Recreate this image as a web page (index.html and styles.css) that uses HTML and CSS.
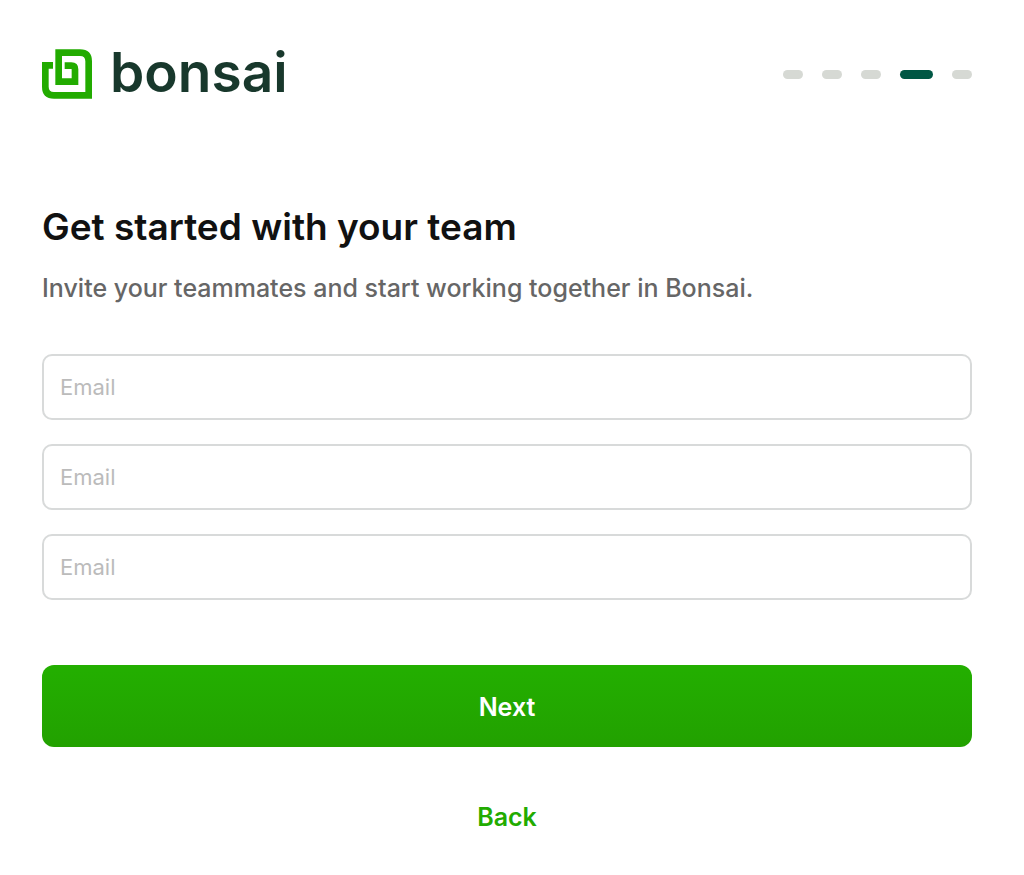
FILE: index.html
```html
<!DOCTYPE html>
<html lang="en">
<head>
  <meta charset="utf-8">
  <meta name="viewport" content="width=device-width, initial-scale=1">
  <title>Bonsai – Invite your team</title>
  <link rel="stylesheet" href="styles.css">
</head>
<body>
  <main class="page">
    <header class="header">
      <div class="brand">
        <svg class="brand-mark" viewBox="35 33 150 148" aria-hidden="true">
          <path d="M68 81H45V145Q45 171 71 171H175V69Q175 43 149 43H85V130H134V93Q134 82 123 82H103"/>
        </svg>
        <span class="brand-name">bonsai</span>
      </div>
      <ol class="steps" aria-label="Step 4 of 5">
        <li class="step"></li>
        <li class="step"></li>
        <li class="step"></li>
        <li class="step step-current" aria-current="step"></li>
        <li class="step"></li>
      </ol>
    </header>
    <h1 class="title">Get started with your team</h1>
    <p class="subtitle">Invite your teammates and start working together in Bonsai.</p>
    <form class="form">
      <div class="fields">
        <input class="field" type="email" placeholder="Email" aria-label="Email of teammate 1">
        <input class="field" type="email" placeholder="Email" aria-label="Email of teammate 2">
        <input class="field" type="email" placeholder="Email" aria-label="Email of teammate 3">
      </div>
      <button class="next" type="submit">Next</button>
      <button class="back" type="button">Back</button>
    </form>
  </main>
</body>
</html>
```
FILE: styles.css
```css
* {
  box-sizing: border-box;
}

body {
  margin: 0;
  background: #fff;
  color: #111;
  font-family: Inter, "Liberation Sans", sans-serif;
}

.page {
  padding: 42px 52px 32px 42px;
}

.header {
  display: flex;
  align-items: center;
  justify-content: space-between;
}

.brand {
  display: flex;
  align-items: center;
  gap: 18px;
}

.brand-mark {
  width: 50px;
  height: 50px;
  fill: none;
  stroke: #22ab00;
  stroke-width: 20;
}

.brand-name {
  padding-bottom: 4px;
  color: #18382c;
  font-size: 55px;
  font-weight: 600;
  line-height: 60px;
}

.steps {
  display: flex;
  gap: 19px;
  margin: 0;
  padding: 0;
  list-style: none;
}

.step {
  width: 20px;
  height: 9px;
  border-radius: 5px;
  background: #d6d9d4;
}

.step-current {
  width: 33px;
  background: #005744;
}

.title {
  margin: 97px 0 0;
  font-size: 37px;
  font-weight: 600;
  line-height: 48px;
}

.subtitle {
  margin: 21px 0 0;
  color: #666;
  font-size: 25px;
  font-weight: 500;
  line-height: 32px;
}

.form {
  display: flex;
  flex-direction: column;
  margin-top: 50px;
}

.fields {
  display: grid;
  gap: 24px;
}

.field {
  width: 100%;
  height: 66px;
  padding: 0 16px;
  border: 2px solid #d8dada;
  border-radius: 10px;
  background: #fff;
  color: #111;
  font: 400 22px Inter, "Liberation Sans", sans-serif;
}

.field::placeholder {
  color: #bbb;
  opacity: 1;
}

.next {
  height: 82px;
  padding: 2px 0 0;
  margin-top: 65px;
  border: 0;
  border-radius: 12px;
  background: linear-gradient(#23af00, #22a100);
  color: #fff;
  font: 600 25px Inter, "Liberation Sans", sans-serif;
}

.back {
  align-self: center;
  margin-top: 50px;
  padding: 0;
  border: 0;
  background: none;
  color: #22ab00;
  font: 600 25px/40px Inter, "Liberation Sans", sans-serif;
}
```
